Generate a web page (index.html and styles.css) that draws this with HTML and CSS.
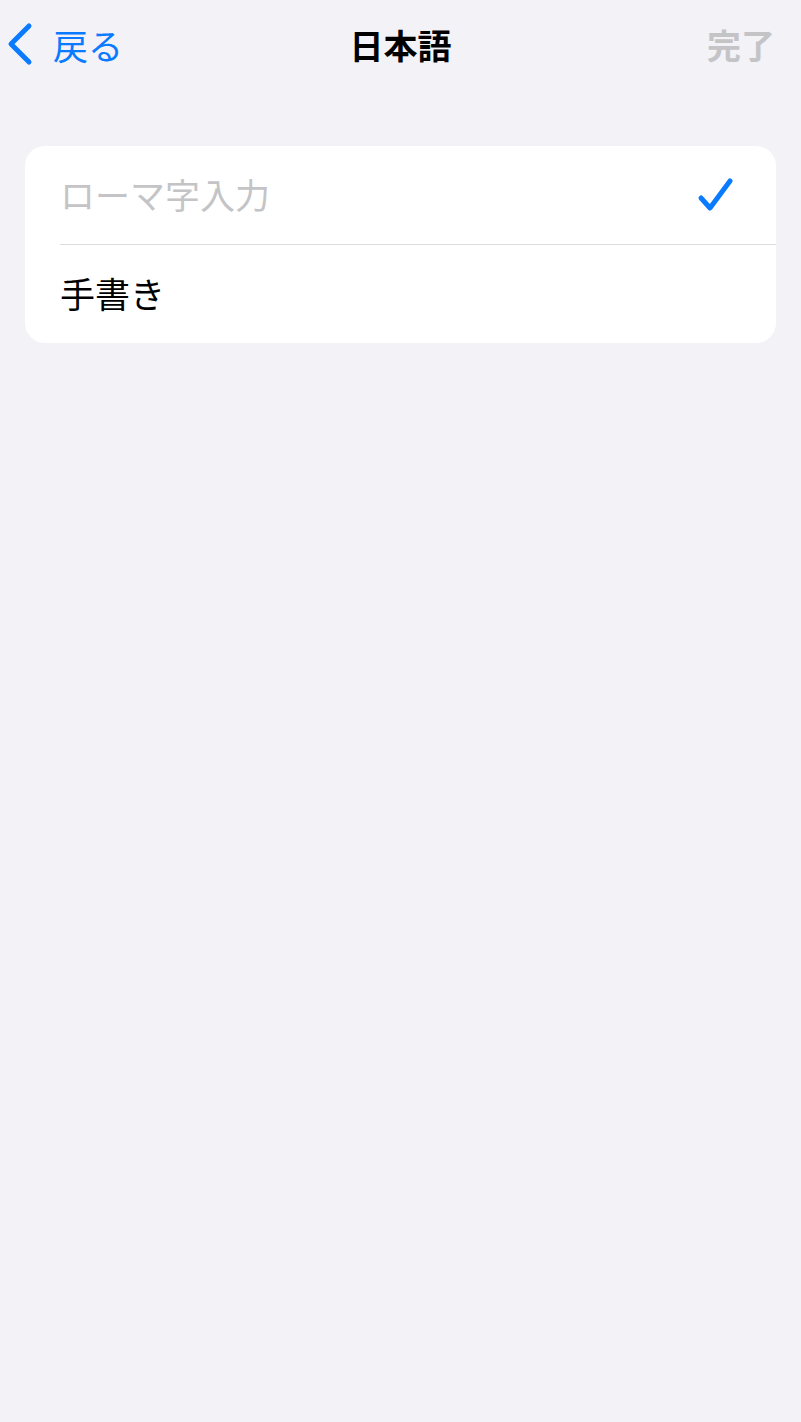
FILE: index.html
```html
<!DOCTYPE html>
<html lang="ja">
<head>
    <meta charset="UTF-8">
    <meta name="viewport" content="width=device-width, initial-scale=1.0">
    <title>日本語</title>
    <link rel="stylesheet" href="styles.css">
</head>
<body>
    <div class="nav-bar">
        <a class="nav-back" href="#">
            <svg class="chevron" width="30" height="44" viewBox="0 0 30 44">
                <path d="M24 4 L6 22 L24 40" fill="none" stroke="#0a7aff" stroke-width="5" stroke-linecap="round" stroke-linejoin="round"/>
            </svg>
            <span>戻る</span>
        </a>
        <h1 class="nav-title">日本語</h1>
        <span class="nav-done">完了</span>
    </div>

    <div class="list-group">
        <div class="list-row">
            <span class="row-label disabled">ローマ字入力</span>
            <svg class="check" width="38" height="36" viewBox="0 0 38 36">
                <path d="M5 21 L14 31 L34 4" fill="none" stroke="#0a7aff" stroke-width="5" stroke-linecap="round" stroke-linejoin="round"/>
            </svg>
        </div>
        <div class="list-row">
            <span class="row-label">手書き</span>
        </div>
    </div>
</body>
</html>
```

FILE: styles.css
```css
body {
    margin: 0;
    font-family: "Noto Sans CJK JP", "Noto Sans", sans-serif;
    background: #f2f2f7;
    color: #000;
    height: 1422px;
}
.nav-bar {
    display: flex;
    align-items: center;
    justify-content: space-between;
    height: 88px;
    padding: 0 26px 0 5px;
    margin-bottom: 58px;
    position: relative;
}
.nav-back {
    display: flex;
    align-items: center;
    gap: 18px;
    color: #0a7aff;
    text-decoration: none;
    font-size: 35px;
}
.nav-title {
    position: absolute;
    left: 0;
    right: 0;
    text-align: center;
    margin: 0;
    font-size: 34px;
    font-weight: bold;
    pointer-events: none;
}
.nav-done {
    font-size: 34px;
    font-weight: bold;
    color: #c4c4c7;
}
.list-group {
    margin: 0 25px;
    background: #fff;
    border-radius: 20px;
    overflow: hidden;
}
.list-row {
    display: flex;
    align-items: center;
    justify-content: space-between;
    height: 98px;
    margin-left: 35px;
    padding-right: 42px;
}
.list-row + .list-row {
    border-top: 1px solid #dcdce0;
}
.row-label {
    font-size: 35px;
    margin-top: -3px;
}
.row-label.disabled {
    color: #c4c4c7;
}
```
